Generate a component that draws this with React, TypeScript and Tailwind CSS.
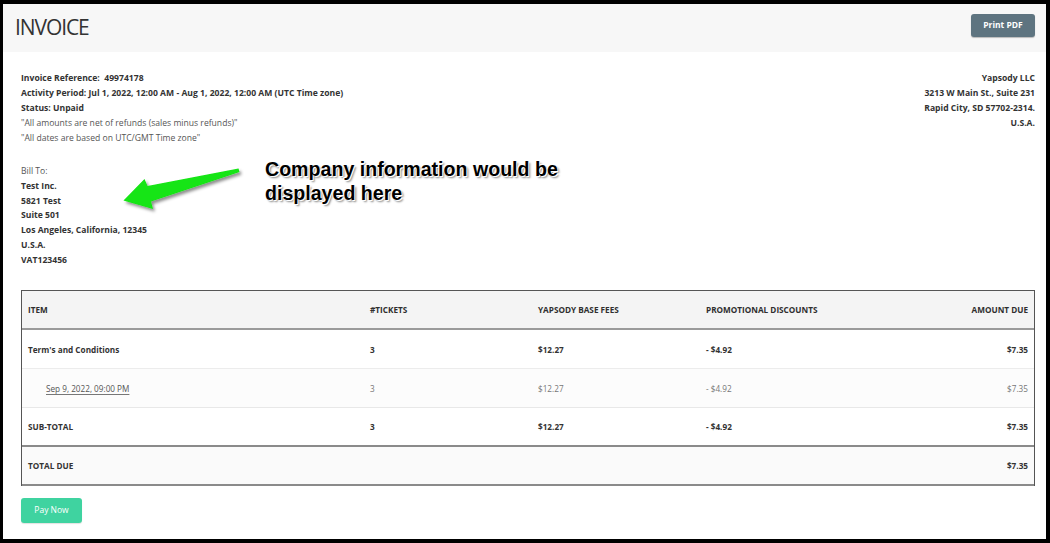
import React from "react";

const font = { fontFamily: '"Open Sans", "Noto Sans", sans-serif' };

type Row = {
  item: React.ReactNode;
  tickets: string;
  fees: string;
  discount: string;
  amount: string;
  tone: "bold" | "muted";
  bg: string;
  border: string;
};

function InfoLine({ children, muted = false }: { children: React.ReactNode; muted?: boolean }) {
  return (
    <div className={muted ? "font-normal text-[#555]" : "font-bold text-[#333]"}>{children}</div>
  );
}

function GreenArrow() {
  return (
    <svg
      className="absolute left-[110px] top-[155px]"
      width="145"
      height="65"
      viewBox="110 155 145 65"
    >
      <defs>
        <filter id="arrow-shadow" x="-20%" y="-20%" width="140%" height="160%">
          <feDropShadow dx="2" dy="2.5" stdDeviation="1.6" floodColor="#000" floodOpacity="0.45" />
        </filter>
      </defs>
      <polygon
        points="120.5,196.5 141.5,175 144.5,182 235.5,164.5 236.5,168 148,197.5 150,205"
        fill="#12e512"
        filter="url(#arrow-shadow)"
      />
    </svg>
  );
}

export default function App() {
  const rows: Row[] = [
    {
      item: "Term's and Conditions",
      tickets: "3",
      fees: "$12.27",
      discount: "- $4.92",
      amount: "$7.35",
      tone: "bold",
      bg: "bg-white",
      border: "border-b border-[#ececec]",
    },
    {
      item: (
        <span className="pl-[18px] underline decoration-[#777] underline-offset-2 text-[#555]">
          Sep 9, 2022, 09:00 PM
        </span>
      ),
      tickets: "3",
      fees: "$12.27",
      discount: "- $4.92",
      amount: "$7.35",
      tone: "muted",
      bg: "bg-[#fcfcfc]",
      border: "border-b border-[#e8e8e8]",
    },
    {
      item: "SUB-TOTAL",
      tickets: "3",
      fees: "$12.27",
      discount: "- $4.92",
      amount: "$7.35",
      tone: "bold",
      bg: "bg-white",
      border: "border-b-2 border-[#8a8a8a]",
    },
  ];

  return (
    <div className="w-[1050px] h-[543px] bg-black pt-[4px] pl-[3px] pr-[4px] pb-[4px]" style={font}>
      <div className="relative w-full h-full bg-white overflow-hidden">
        {/* page header */}
        <div className="h-[48px] bg-[#f7f7f7] flex items-center justify-between pl-[12px] pr-[11px]">
          <h1 className="text-[21px] leading-none font-medium text-[#333] tracking-[-1.1px] mt-[-1px]">INVOICE</h1>
          <button className="h-[23px] w-[64px] mt-[-5px] rounded-[3px] bg-[#5e7480] text-white text-[8.5px] font-bold shadow-[0_1px_1px_rgba(0,0,0,0.25)]">
            Print PDF
          </button>
        </div>

        <div className="pl-[18px] pr-[11px]">
          {/* invoice meta + vendor address */}
          <div className="flex justify-between pt-[19px] text-[8.6px] leading-[15px]">
            <div>
              <InfoLine>Invoice Reference:&nbsp; 49974178</InfoLine>
              <InfoLine>Activity Period: Jul 1, 2022, 12:00 AM - Aug 1, 2022, 12:00 AM (UTC Time zone)</InfoLine>
              <InfoLine>Status: Unpaid</InfoLine>
              <InfoLine muted>"All amounts are net of refunds (sales minus refunds)"</InfoLine>
              <InfoLine muted>"All dates are based on UTC/GMT Time zone"</InfoLine>
            </div>
            <div className="text-right">
              <InfoLine>Yapsody LLC</InfoLine>
              <InfoLine>3213 W Main St., Suite 231</InfoLine>
              <InfoLine>Rapid City, SD 57702-2314.</InfoLine>
              <InfoLine>U.S.A.</InfoLine>
            </div>
          </div>

          {/* bill to */}
          <div className="mt-[18px] text-[8.6px] leading-[14.8px]">
            <InfoLine muted>Bill To:</InfoLine>
            <InfoLine>Test Inc.</InfoLine>
            <InfoLine>5821 Test</InfoLine>
            <InfoLine>Suite 501</InfoLine>
            <InfoLine>Los Angeles, California, 12345</InfoLine>
            <InfoLine>U.S.A.</InfoLine>
            <InfoLine>VAT123456</InfoLine>
          </div>

          {/* line items */}
          <div className="mt-[22px] border border-[#555] border-b-0 text-[8.2px]">
            <div className="grid grid-cols-[342px_168px_168px_168px_1fr] h-[39px] pt-[3px] items-center bg-[#f4f4f4] border-b-2 border-[#9a9a9a] font-bold text-[#2f2f2f] px-[6px]">
              <div>ITEM</div>
              <div>#TICKETS</div>
              <div>YAPSODY BASE FEES</div>
              <div>PROMOTIONAL DISCOUNTS</div>
              <div className="text-right">AMOUNT DUE</div>
            </div>
            {rows.map((r, i) => (
              <div
                key={i}
                className={`grid grid-cols-[342px_168px_168px_168px_1fr] h-[39px] pt-[3px] items-center px-[6px] ${r.bg} ${r.border} ${
                  r.tone === "bold" ? "font-bold text-[#333]" : "font-normal text-[#777]"
                }`}
              >
                <div>{r.item}</div>
                <div>{r.tickets}</div>
                <div>{r.fees}</div>
                <div>{r.discount}</div>
                <div className="text-right">{r.amount}</div>
              </div>
            ))}
            <div className="grid grid-cols-[342px_1fr] h-[39px] pt-[3px] items-center px-[6px] bg-[#fafafa] border-b-2 border-[#8a8a8a] font-bold text-[#333]">
              <div>TOTAL DUE</div>
              <div className="text-right">$7.35</div>
            </div>
          </div>

          <button className="mt-[12px] h-[25px] w-[61px] rounded-[3px] bg-[#3fd3a0] text-white text-[8.5px] shadow-[0_1px_1px_rgba(0,0,0,0.12)]">
            Pay Now
          </button>
        </div>

        {/* callout */}
        <GreenArrow />
        <div
          className="absolute left-[262px] top-[153px] text-[19.6px] leading-[24px] font-bold text-black [text-shadow:1px_1px_0_#fff,-1px_-1px_0_#fff,2px_2px_2px_#8a8a8a]"
          style={{ fontFamily: '"Liberation Sans", Arial, sans-serif' }}
        >
          Company information would be
          <br />
          displayed here
        </div>
      </div>
    </div>
  );
}
